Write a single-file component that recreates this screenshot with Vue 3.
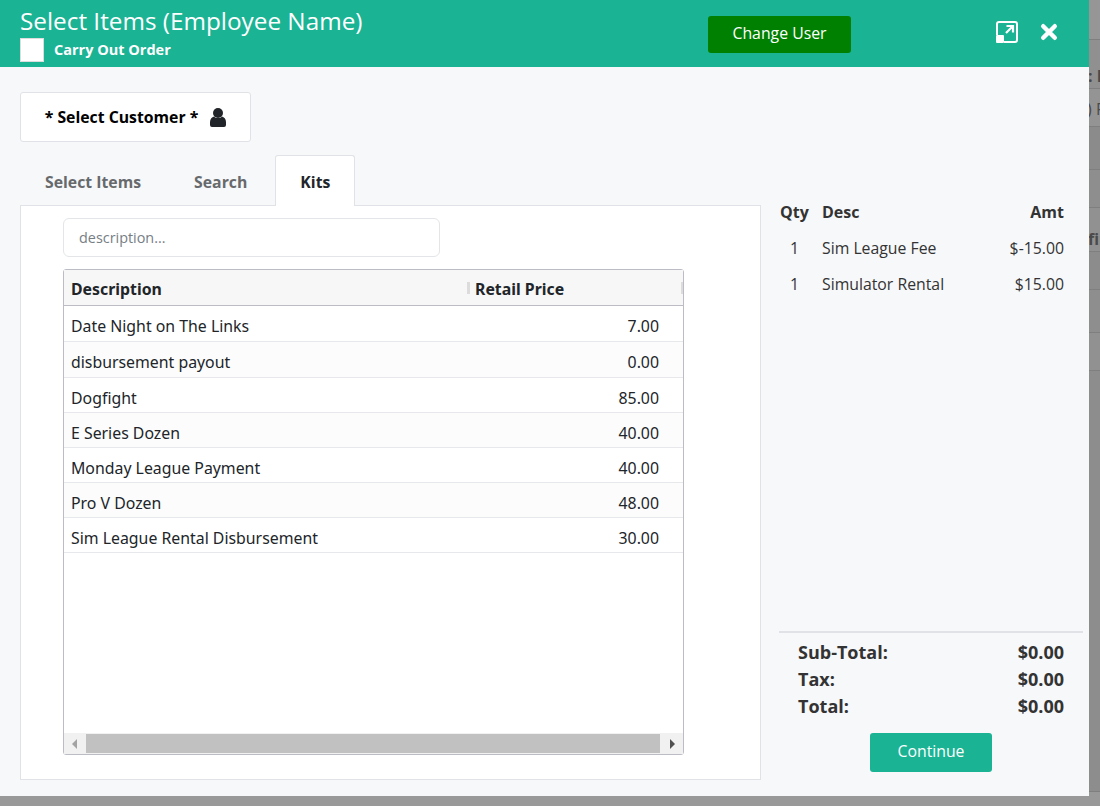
<script setup>
const rows = [
  { d: 'Date Night on The Links', p: '7.00', h: 36 },
  { d: 'disbursement payout', p: '0.00', h: 36 },
  { d: 'Dogfight', p: '85.00', h: 35 },
  { d: 'E Series Dozen', p: '40.00', h: 35 },
  { d: 'Monday League Payment', p: '40.00', h: 35 },
  { d: 'Pro V Dozen', p: '48.00', h: 35 },
  { d: 'Sim League Rental Disbursement', p: '30.00', h: 35 },
]
const lines = [
  { q: 1, d: 'Sim League Fee', a: '$-15.00' },
  { q: 1, d: 'Simulator Rental', a: '$15.00' },
]
const totals = [
  ['Sub-Total:', '$0.00'],
  ['Tax:', '$0.00'],
  ['Total:', '$0.00'],
]
const bands = [
  [40, '#969696'], [49, '#909090'], [38, '#949494'], [43, '#8b8b8b'], [38, '#8e8e8e'],
  [44, '#919191'], [38, '#8c8c8c'], [43, '#8e8e8e'], [38, '#919191'], [421, '#8d8d8d'],
]
</script>

<template>
  <div class="page">
    <div class="behind">
      <div v-for="(b, i) in bands" :key="i" class="band" :style="{ height: b[0] + 'px', background: b[1] }"></div>
      <span class="b1">: F</span>
      <span class="b2">) F</span>
      <span class="b3">fir</span>
    </div>
    <div class="modal">
      <header class="head">
        <div class="head-left">
          <h1>Select Items (Employee Name)</h1>
          <div class="sub"><span class="check"></span><span class="sub-t">Carry Out Order</span></div>
        </div>
        <button class="change">Change User</button>
        <svg class="i-expand" viewBox="0 0 22 22" width="22" height="22">
          <path d="M1 14V3A2 2 0 0 1 3 1H19A2 2 0 0 1 21 3V19A2 2 0 0 1 19 21H8" fill="none" stroke="#fff" stroke-width="2"/>
          <rect x="0" y="14" width="8" height="8" rx="1" fill="#fff"/>
          <path d="M10 12l6-6M10.500 5h6.500v6.500" fill="none" stroke="#fff" stroke-width="2.200"/>
        </svg>
        <svg class="i-close" viewBox="0 0 18 18" width="18" height="18">
          <path d="M3.200 3.200l11.600 11.600M14.800 3.200L3.200 14.800" stroke="#fff" stroke-width="4.400" stroke-linecap="round"/>
        </svg>
      </header>

      <div class="body">
        <button class="customer">
          <span>* Select Customer *</span>
          <svg viewBox="0 0 16 19" width="16" height="19"><circle cx="8" cy="5" r="5" fill="#212529"/><path d="M2 19a2 2 0 0 1-2-2v-3c0-3 2-5 4-5.500 1 1 2.400 1.600 4 1.600s3-.6 4-1.600c2 .5 4 2.500 4 5.500v3a2 2 0 0 1-2 2z" fill="#212529"/></svg>
        </button>

        <div class="main">
          <section class="left">
            <nav class="tabs">
              <a>Select Items</a>
              <a>Search</a>
              <a class="active">Kits</a>
            </nav>
            <div class="panel">
              <input class="search" placeholder="description..." />
              <div class="grid">
                <div class="grid-head">
                  <div class="c-desc">Description<i class="grip g1"></i></div>
                  <div class="c-price">Retail Price<i class="grip g2"></i></div>
                </div>
                <div class="grid-body">
                  <div v-for="(r, i) in rows" :key="r.d" class="row" :class="{ alt: i % 2 === 1 }" :style="{ height: r.h + 'px' }">
                    <span class="c-desc">{{ r.d }}</span>
                    <span class="num">{{ r.p }}</span>
                  </div>
                </div>
                <div class="scroll">
                  <span class="arrow left-a"></span>
                  <span class="thumb"></span>
                  <span class="arrow right-a"></span>
                </div>
              </div>
            </div>
          </section>

          <aside class="right">
            <div class="lines">
              <div class="line lh"><span class="q">Qty</span><span class="d">Desc</span><span class="a">Amt</span></div>
              <div v-for="l in lines" :key="l.d" class="line"><span class="q c">{{ l.q }}</span><span class="d">{{ l.d }}</span><span class="a">{{ l.a }}</span></div>
            </div>
            <div class="totals">
              <div v-for="t in totals" :key="t[0]" class="total"><span>{{ t[0] }}</span><span>{{ t[1] }}</span></div>
              <button class="continue">Continue</button>
            </div>
          </aside>
        </div>
      </div>
    </div>
  </div>
</template>

<style>
html, body { margin: 0; background: #999; overflow: hidden; }
</style>

<style scoped>
* { box-sizing: border-box; }
.page { position: relative; width: 1100px; height: 806px; background: #999; font-family: "Open Sans", sans-serif; color: #212529; overflow: hidden; }
.behind { position: absolute; inset: 0; color: #4a4a4a; font-size: 16px; line-height: 22px; }
.band { border-bottom: 1px solid #7f7f7f; }
.behind span { position: absolute; white-space: nowrap; }
.b1 { left: 1088px; top: 65px; font-weight: 700; }
.b2 { left: 1087px; top: 98px; }
.b3 { left: 1088px; top: 228px; font-weight: 700; }
.modal { position: relative; width: 1089px; height: 796px; background: #f7f8fa; display: flex; flex-direction: column; }
.head { height: 67px; flex: none; background: #1ab394; color: #fff; display: flex; align-items: flex-start; padding-left: 20px; }
.head-left { width: 688px; }
h1 { margin: 0; font-size: 24.300px; font-weight: 400; line-height: 32px; padding-top: 5px; height: 38px; }
.sub { display: flex; align-items: center; gap: 10px; font-size: 14.500px; font-weight: 700; height: 24px; }
.sub-t { padding-bottom: 2px; }
.check { width: 24px; height: 24px; background: #fff; border: 1px solid #ddd; }
.change { margin-top: 16px; width: 143px; height: 37px; background: #008000; color: #fff; border: 0; border-radius: 3px; padding: 0 0 4px; font: 400 15.800px "Open Sans", sans-serif; }
.i-expand { margin: 21px 0 0 145px; }
.i-close { margin: 23px 0 0 22px; }
.body { flex: 1; padding: 25px 6px 16px 20px; display: flex; flex-direction: column; min-height: 0; }
.customer { width: 231px; height: 50px; flex: none; background: #fff; border: 1px solid #e0e2e8; border-radius: 3px; display: flex; align-items: center; justify-content: center; gap: 12px; font: 700 15.800px "Open Sans", sans-serif; color: #000; }
.main { flex: 1; display: flex; margin-top: 13px; min-height: 0; }
.left { width: 741px; flex: none; display: flex; flex-direction: column; }
.tabs { display: flex; height: 51px; flex: none; font-size: 15.800px; font-weight: 700; color: #676a6c; position: relative; z-index: 1; margin-bottom: -1px; }
.tabs a { padding: 2px 25px 0; display: flex; align-items: center; }
.tabs a:nth-child(2) { padding-left: 28px; padding-right: 28px; }
.tabs a.active { background: #fff; color: #212529; border: 1px solid #e0e2e8; border-bottom: 0; border-radius: 3px 3px 0 0; padding: 2px 24px 0 24px; }
.panel { flex: 1; background: #fff; border: 1px solid #e0e2e8; padding: 12px 42px; min-height: 0; }
.search { display: block; width: 377px; height: 39px; border: 1px solid #e3e5e9; border-radius: 6px; padding: 0 15px; font: 400 14.400px "Open Sans", sans-serif; color: #6c757d; background: #fff; outline: 0; }
.search::placeholder { color: #767e85; opacity: 1; }
.grid { margin-top: 12px; width: 621px; height: 486px; border: 1px solid #bbbcc4; border-radius: 3px; display: flex; flex-direction: column; font-family: "Noto Sans", "Open Sans", sans-serif; font-size: 15.850px; }
.grid-head { height: 36px; flex: none; background: #f7f7f7; border-bottom: 1px solid #bbbcc4; display: flex; align-items: flex-start; font-weight: 700; }
.grid-head > div { position: relative; padding-left: 7px; line-height: 38px; height: 35px; }
.grid-head .c-desc { width: 404px; }
.grid-head .c-price { flex: 1; }
.grip { position: absolute; top: 12px; height: 12px; background: #dcdcdc; }
.g1 { right: -2px; width: 3px; }
.g2 { right: 0; width: 2px; }
.grid-body { flex: 1; background: #fff; min-height: 0; }
.row { display: flex; align-items: center; justify-content: space-between; padding: 5px 24px 0 7px; border-bottom: 1px solid #e6e8ec; color: #212529; }
.row.alt { background: #fcfcfc; }
.scroll { height: 21px; flex: none; background: #f1f1f1; display: flex; align-items: flex-start; padding-top: 1px; }
.thumb { width: 574px; height: 19px; background: #c1c1c1; }
.arrow { width: 22px; flex: none; height: 19px; position: relative; }
.arrow::after { content: ""; position: absolute; top: 5px; border: 5px solid transparent; }
.left-a::after { left: 8px; border-right: 5px solid #a3a3a3; border-left: 0; }
.right-a::after { left: 10px; border-left: 5px solid #505050; border-right: 0; }
.right { flex: 1; padding: 0 0 0 18px; display: flex; flex-direction: column; min-width: 0; }
.lines { flex: 1; padding-top: 50px; margin-top: -1px; font-size: 15.800px; color: #333; padding-right: 19px; }
.line { display: flex; height: 36px; align-items: center; }
.lh { font-weight: 700; height: 16px; margin-bottom: 10px; font-size: 16px; }
.q { width: 43px; padding-left: 1px; }
.q.c { text-align: center; padding-right: 13px; }
.d { flex: 1; }
.a { text-align: right; }
.totals { flex: none; border-top: 2px solid #e0e2e8; padding: 5px 0 0 19px; height: 149px; }
.total { display: flex; justify-content: space-between; height: 27px; align-items: center; padding-right: 19px; font-size: 18px; font-weight: 700; color: #333; }
.continue { display: block; margin: 14px 0 0 72px; width: 122px; height: 39px; background: #1ab394; border: 0; border-radius: 3px; color: #fff; padding: 0 0 4px; font: 400 15.800px "Open Sans", sans-serif; }
</style>
